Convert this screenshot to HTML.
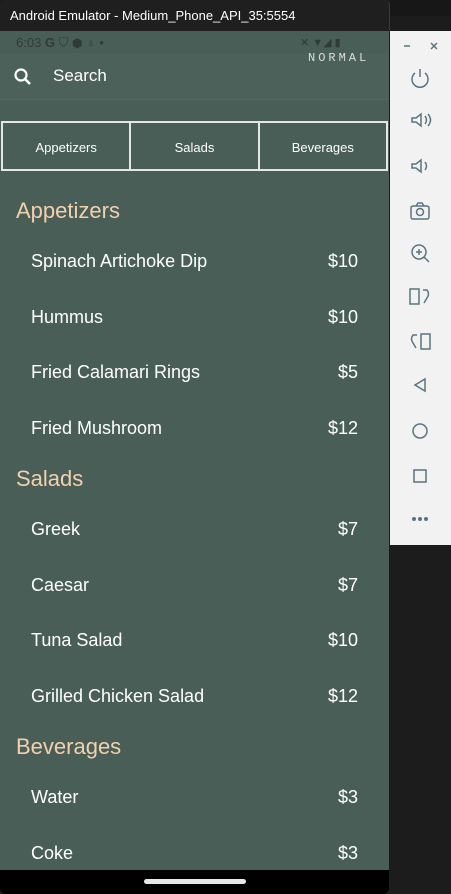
<!DOCTYPE html>
<html><head><style>
*{margin:0;padding:0;box-sizing:border-box}
body{width:451px;height:894px;background:#1c1c1c;font-family:"Liberation Sans",sans-serif;position:relative;overflow:hidden}
.title{position:absolute;left:0;top:0;width:390px;height:31px;background:#1f1f1f;border-radius:6px 6px 0 0;color:#fff;font-size:13px;line-height:31px;padding-left:10px;border-right:1px solid #3a3a3a}
.rtop{position:absolute;left:390px;top:0;width:61px;height:16px;background:#171717}
.screen{position:absolute;left:0;top:31px;width:389px;height:839px;background:#4a5e58}
.status{position:absolute;left:16px;top:4px;color:#2f3b37;font-size:13px}
.bar{position:absolute;left:0;top:870px;width:389px;height:24px;background:#000;border-radius:0 0 6px 6px}
.pill{position:absolute;left:144px;top:879px;width:102px;height:5px;border-radius:3px;background:#e8e8e8}
.search{position:absolute;left:0;top:22px;width:389px;height:47px;background:#4d615b;border-bottom:1px solid #52655f}
.search span{position:absolute;left:53px;top:13px;color:#fff;font-size:17px}
.normal{position:absolute;left:308px;top:20px;color:#ddd;font-family:"Liberation Mono",monospace;font-size:12px;letter-spacing:3px}
.tabs{position:absolute;left:1px;top:90px;width:387px;height:50px;display:flex}
.tabs div{flex:1;border:2px solid #e6e6e6;margin-left:-2px;color:#fff;font-size:13px;text-align:center;line-height:50px}
.tabs div:first-child{margin-left:0}
.h{position:absolute;left:16px;color:#f3d0ad;font-size:22px}
.i{position:absolute;left:31px;width:327px;color:#fff;font-size:18px;display:flex;justify-content:space-between}
.side{position:absolute;left:390px;top:31px;width:61px;height:514px;background:#f2f2f2}
.side svg{position:absolute;left:0;top:0}
</style></head><body>
<div class="title">Android Emulator - Medium_Phone_API_35:5554</div>
<div class="rtop"></div>
<div class="screen">
<div class="status">6:03 <b>G</b> ⛉ ⬢ ♁ •</div>
<div style="position:absolute;left:300px;top:5px;width:60px;height:12px;color:#2f3b37;font-size:11px">✕ ▼◢ ▮</div>
<div class="search">
<svg style="position:absolute;left:13px;top:14px" width="20" height="20" viewBox="0 0 20 20"><circle cx="8" cy="8" r="5.5" fill="none" stroke="#fff" stroke-width="2.2"/><line x1="12" y1="12" x2="17" y2="17" stroke="#fff" stroke-width="2.6"/></svg>
<span>Search</span></div>
<div class="normal">NORMAL</div>
<div class="tabs"><div>Appetizers</div><div>Salads</div><div>Beverages</div></div>
</div>
<div class="h" style="top:198px">Appetizers</div>
<div class="i" style="top:251px"><span>Spinach Artichoke Dip</span><span>$10</span></div>
<div class="i" style="top:307px"><span>Hummus</span><span>$10</span></div>
<div class="i" style="top:362px"><span>Fried Calamari Rings</span><span>$5</span></div>
<div class="i" style="top:418px"><span>Fried Mushroom</span><span>$12</span></div>
<div class="h" style="top:466px">Salads</div>
<div class="i" style="top:519px"><span>Greek</span><span>$7</span></div>
<div class="i" style="top:575px"><span>Caesar</span><span>$7</span></div>
<div class="i" style="top:630px"><span>Tuna Salad</span><span>$10</span></div>
<div class="i" style="top:686px"><span>Grilled Chicken Salad</span><span>$12</span></div>
<div class="h" style="top:734px">Beverages</div>
<div class="i" style="top:787px"><span>Water</span><span>$3</span></div>
<div class="i" style="top:843px"><span>Coke</span><span>$3</span></div>
<div class="bar"></div><div class="pill"></div>
<div class="side">
<svg width="61" height="514" viewBox="0 0 61 514" fill="none" stroke="#5a7580" stroke-width="1.5">
<line x1="14" y1="15" x2="20" y2="15"/><path d="M41 12l6 6M47 12l-6 6"/>
<path d="M25 42a8 8 0 1 0 10 0M30 38v8"/>
<path d="M22 87h4l5-4v12l-5-4h-4zM35 85q3 4 0 8M38 83q5 6 0 12"/>
<path d="M22 133h4l5-4v12l-5-4h-4zM35 131q3 4 0 8"/>
<rect x="21" y="175" width="18" height="13" rx="2"/><circle cx="30" cy="181" r="3.5"/><path d="M26 175l2-3h4l2 3"/>
<circle cx="29" cy="221" r="7"/><path d="M34 226l5 5M26 221h6M29 218v6"/>
<rect x="20" y="258" width="9" height="15"/><path d="M33 259h4q3 4 0 8l-3 5"/>
<rect x="31" y="303" width="9" height="15"/><path d="M27 304h-4q-3 4 0 8l3 5"/>
<path d="M35 348l-10 6 10 6z"/>
<circle cx="30" cy="400" r="7"/>
<rect x="24" y="439" width="12" height="12"/>
<g fill="#5a7580" stroke="none"><circle cx="24" cy="488" r="2"/><circle cx="30" cy="488" r="2"/><circle cx="36" cy="488" r="2"/></g>
</svg></div>
</body></html>
